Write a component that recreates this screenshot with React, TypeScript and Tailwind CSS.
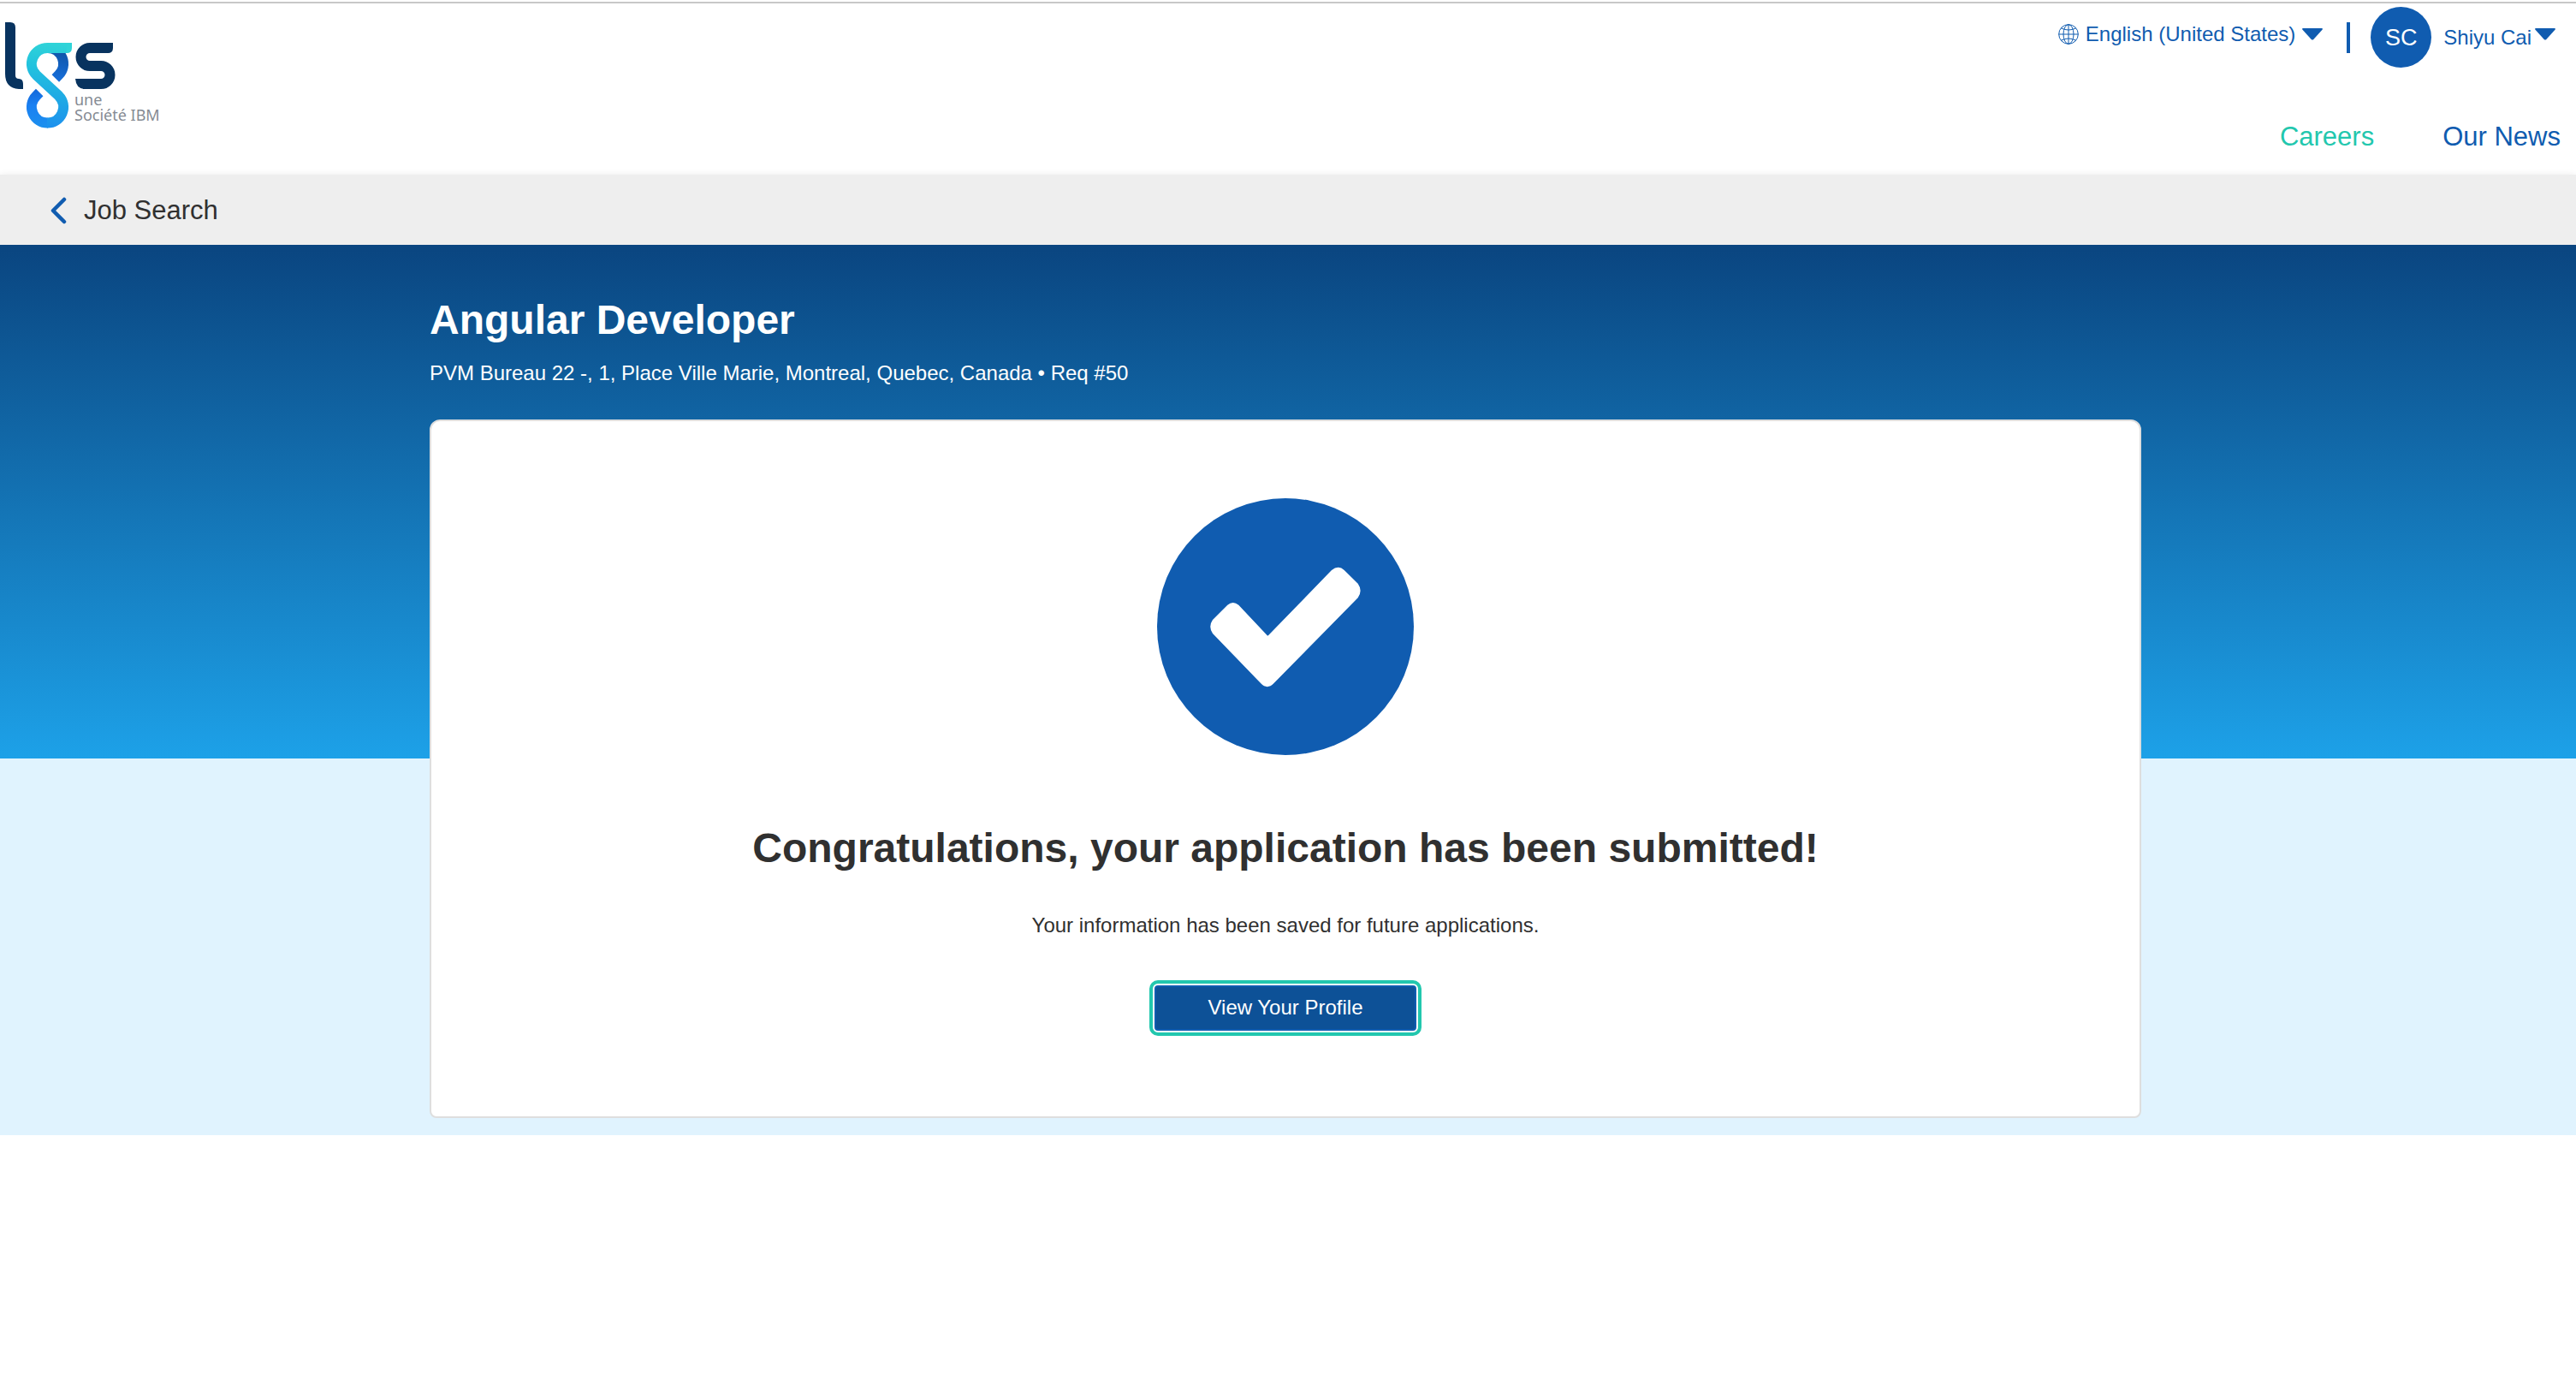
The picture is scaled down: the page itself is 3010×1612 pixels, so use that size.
function LgsLogo() {
  return (
    <svg viewBox="0 0 190 160" className="h-[160px] w-[190px]" role="img" aria-label="LGS, une Société IBM">
      <defs>
        <linearGradient id="ribbon" gradientUnits="userSpaceOnUse" x1="66" y1="50" x2="56" y2="150">
          <stop offset="0" stopColor="#30d4d8" />
          <stop offset="0.3" stopColor="#22c2de" />
          <stop offset="0.7" stopColor="#1fa5e6" />
          <stop offset="1" stopColor="#1c8fee" />
        </linearGradient>
        <linearGradient id="upper" gradientUnits="userSpaceOnUse" x1="72" y1="60" x2="66" y2="95">
          <stop offset="0" stopColor="#0f55a8" />
          <stop offset="1" stopColor="#176fdc" />
        </linearGradient>
        <linearGradient id="lower" gradientUnits="userSpaceOnUse" x1="44" y1="104" x2="50" y2="148">
          <stop offset="0" stopColor="#1468da" />
          <stop offset="0.4" stopColor="#1a80f2" />
          <stop offset="1" stopColor="#1c8fee" />
        </linearGradient>
      </defs>
      <path d="M6 26H12Q18 26 18 32V88Q18 92 22 92Q27 92 27 98V104H22Q6 103 6 86Z" fill="#08335f" />
      <path d="M127 56H105A10.5 10.5 0 0 0 105 77H118A10.5 10.5 0 0 1 118 98H97" fill="none" stroke="#08335f" strokeWidth="12" />
      <path d="M126 50H132V56Q132 62 126 62Z" fill="#08335f" />
      <path d="M98 92H88Q89 103 98 104Z" fill="#08335f" />
      <path d="M56 56A18.5 18.5 0 0 1 68.600 87.600L64.800 91.400" fill="none" stroke="url(#upper)" strokeWidth="12" />
      <path d="M46.200 108.100L42.400 111.900A18.500 18.500 0 0 0 56 143.500" fill="none" stroke="url(#lower)" strokeWidth="12" />
      <path d="M79 56H55.500A18.500 18.500 0 0 0 42.400 87.600L68.600 111.900A18.500 18.500 0 0 1 55 143.500" fill="none" stroke="url(#ribbon)" strokeWidth="12" />
      <path d="M78 50H84V56Q84 62 78 62Z" fill="#30d4d8" />
      <text x="87" y="123" fontSize="18" fill="#858b93" fontFamily="Noto Sans, sans-serif">une</text>
      <text x="87" y="141" fontSize="18" fill="#858b93" fontFamily="Noto Sans, sans-serif">Société IBM</text>
    </svg>
  );
}

function GlobeIcon() {
  return (
    <svg viewBox="0 0 24 24" className="size-6" fill="none" stroke="currentColor" strokeWidth="1" aria-hidden="true">
      <circle cx="12" cy="12" r="11.300" />
      <ellipse cx="12" cy="12" rx="6" ry="11.300" />
      <path d="M12 .7V23.300M.7 12H23.300M3.500 5Q12 9 20.500 5M3.500 19Q12 15 20.500 19" />
    </svg>
  );
}

function Caret() {
  return (
    <svg viewBox="0 0 24 14" className="h-3.5 w-6" fill="currentColor" aria-hidden="true">
      <path d="M1 0H23Q24.500 .5 23.500 1.700L13.300 13Q12 14.200 10.700 13L.5 1.700Q-.5 .5 1 0Z" />
    </svg>
  );
}

function SuccessIcon() {
  return (
    <svg viewBox="0 0 300 300" className="size-[300px]" aria-hidden="true">
      <circle cx="150" cy="150" r="150" fill="#105cb0" />
      <path
        d="M65 142L82.300 124.700Q88.700 119.500 95.300 124.700L128.500 160Q129.300 161 130.200 160L204 84Q212 77.500 218.700 84L234.700 99.700Q240.500 108 234.700 116.300L136.300 216.300Q128.700 224 121.300 216.300L65 158Q59.500 150 65 142Z"
        fill="#fff"
      />
    </svg>
  );
}

function Header() {
  return (
    <header className="flex justify-between border-t-2 border-[#c8c8c8]">
      <a href="#home" className="-mt-1 block">
        <LgsLogo />
      </a>
      <div className="flex flex-col items-end pt-1 pb-6 text-[#105cb0]">
        <div className="flex items-center pr-6">
          <label htmlFor="language" className="flex items-center pb-2">
            <GlobeIcon />
            <select
              id="language"
              aria-label="Language"
              className="ml-2 h-8 appearance-none text-2xl leading-8 [field-sizing:content]"
            >
              <option>English (United States)</option>
            </select>
            <span className="ml-2">
              <Caret />
            </span>
          </label>
          <span className="ml-7 h-9 w-1 bg-[#105cb0]" />
          <button type="button" aria-haspopup="menu" className="ml-6 flex items-center">
            <span className="flex size-[71px] items-center justify-center rounded-full bg-[#105cb0] text-[27px] leading-8 text-white">
              SC
            </span>
            <span className="ml-3.5 text-2xl leading-8">Shiyu Cai</span>
            <span className="ml-1 pb-2">
              <Caret />
            </span>
          </button>
        </div>
        <nav className="mt-[61px] flex gap-20 pr-[18px] text-[31px] leading-10">
          <a href="#careers" className="text-[#22c7ae]">Careers</a>
          <a href="#news">Our News</a>
        </nav>
      </div>
    </header>
  );
}

export default function App() {
  return (
    <div className="min-h-screen bg-white pt-0.5 font-['Liberation_Sans',Arial,sans-serif] text-[#303030]">
      <Header />
      <div className="flex bg-[#eeeeee] pt-[22px] pb-5 pl-[58px] shadow-[0_0_8px_rgba(0,0,0,0.08)]">
        <a href="#jobs" className="flex items-center gap-5 text-[31px] leading-10">
          <svg viewBox="0 0 20 32" className="h-8 w-5" fill="none" stroke="#105cb0" strokeWidth="4.500" strokeLinecap="round" strokeLinejoin="round" aria-hidden="true">
            <path d="M17 3L4 16L17 29" />
          </svg>
          Job Search
        </a>
      </div>
      <main className="relative bg-[linear-gradient(#0a4580,#1da1e8_600px,#e0f3fe_600px)] pt-[60px] pr-1.5 pb-5">
        <div className="mx-auto max-w-[2000px]">
          <h1 className="text-5xl leading-14 font-bold text-white">Angular Developer</h1>
          <p className="mt-[18px] text-2xl leading-8 text-white">
            PVM Bureau 22 -, 1, Place Ville Marie, Montreal, Quebec, Canada • Req #50
          </p>
          <section className="mt-[38px] flex flex-col items-center rounded-t-xl rounded-b-lg border-2 border-[#dedede] bg-white pt-[90px] pb-[100px] text-center">
            <SuccessIcon />
            <h2 className="mt-[81px] text-5xl leading-14 font-bold">
              Congratulations, your application has been submitted!
            </h2>
            <p className="mt-[46px] text-2xl leading-8">Your information has been saved for future applications.</p>
            <button
              type="button"
              className="mt-[54px] flex h-[53px] w-[306px] items-start justify-center rounded border-2 border-[#105cb0] bg-[#0d5197] pt-2 text-2xl leading-8 text-white outline-4 outline-offset-2 outline-[#22c7ae]"
            >
              View Your Profile
            </button>
          </section>
        </div>
      </main>
    </div>
  );
}
